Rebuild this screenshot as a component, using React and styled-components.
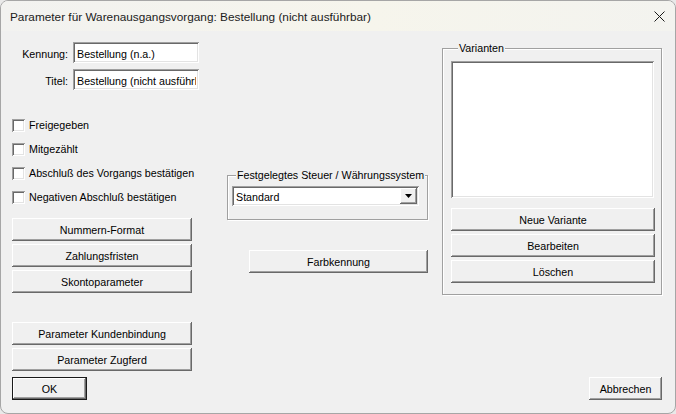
import React from 'react'
import styled, { createGlobalStyle, css } from 'styled-components'

const GlobalStyle = createGlobalStyle`
   html, body {
      margin: 0;
      padding: 0;
      background: #e9e9e9;
   }
   * {
      box-sizing: border-box;
   }
`

const dialogFont = css`
   font-family: "Liberation Sans", Arial, sans-serif;
   font-size: 10.7px;
   color: #000;
`

const raised = css`
   box-shadow: inset -1px -1px #696969, inset 1px 1px #ffffff,
      inset -2px -2px #a0a0a0, inset 2px 2px #f0f0f0;
`

const sunken = css`
   box-shadow: inset 1px 1px #a0a0a0, inset -1px -1px #ffffff,
      inset 2px 2px #696969, inset -2px -2px #e3e3e3;
`

const Window = styled.div`
   width: 676px;
   height: 414px;
   border: 1px solid #a6a6a6;
   border-radius: 8px;
   overflow: hidden;
   background: #f0f0f0;
   display: flex;
   flex-direction: column;
`

const TitleBar = styled.div`
   height: 30px;
   flex-shrink: 0;
   display: flex;
   align-items: center;
   justify-content: space-between;
   padding: 0 9px 0 9px;
   background: linear-gradient(90deg, #f2f2f0 0%, #f6f5ec 55%, #f3f3ef 100%);
`

const Title = styled.span`
   font-family: "Liberation Sans", Arial, sans-serif;
   font-size: 11.8px;
   color: #1b1b1b;
   padding-top: 1px;
`

const CloseButton = styled.div`
   width: 12px;
   height: 12px;
   margin-right: 1px;
   display: flex;
   align-items: center;
   justify-content: center;
`

const Body = styled.div`
   flex: 1;
   display: flex;
   flex-direction: column;
   padding: 11px 13px 0 11px;
   ${dialogFont}
`

const Columns = styled.div`
   display: flex;
   align-items: flex-start;
`

const LeftColumn = styled.div`
   width: 187px;
   display: flex;
   flex-direction: column;
`

const MiddleColumn = styled.div`
   width: 201px;
   margin-left: 28px;
   margin-top: 127px;
   display: flex;
   flex-direction: column;
   align-items: flex-end;
`

const RightColumn = styled.div`
   width: 220px;
   margin-left: 14px;
`

const FieldRow = styled.div`
   display: flex;
   align-items: center;
   gap: 5px;
   & + & {
      margin-top: 6px;
   }
`

const FieldLabel = styled.label`
   width: 56px;
   text-align: right;
   padding-top: 2px;
`

const TextBox = styled.input`
   ${dialogFont}
   ${sunken}
   width: 126px;
   height: 21px;
   border: none;
   background: #fff;
   padding: 2px 3px 0 4px;
   outline: none;
`

const CheckList = styled.div`
   margin-top: 23px;
   display: flex;
   flex-direction: column;
`

const CheckRow = styled.label`
   height: 24px;
   display: flex;
   align-items: center;
   gap: 4px;
`

const CheckBox = styled.input.attrs({ type: 'checkbox' })`
   appearance: none;
   margin: 0;
   width: 13px;
   height: 13px;
   background: #fff;
   ${sunken}
`

const ButtonStack = styled.div`
   display: flex;
   flex-direction: column;
   gap: 3px;
   margin-top: ${p => p.$gap}px;
`

const Button = styled.button`
   ${dialogFont}
   ${raised}
   width: ${p => p.$w}px;
   height: ${p => p.$h || 23}px;
   margin-top: ${p => p.$top || 0}px;
   display: flex;
   align-items: center;
   justify-content: center;
   border: none;
   padding: 1px 0 0 0;
   background: #f0f0f0;
   ${p => p.$default && css`
      box-shadow: inset 0 0 0 1px #1a1a1a, inset -2px -2px #696969,
         inset 2px 2px #ffffff, inset -3px -3px #a0a0a0;
   `}
`

const GroupBox = styled.fieldset`
   margin: 0;
   min-width: 0;
   border: 1px solid #a0a0a0;
   box-shadow: inset 1px 1px #ffffff, 1px 1px #ffffff;
   padding: ${p => p.$pad};
   width: 100%;
   display: flex;
   flex-direction: column;
`

const Legend = styled.legend`
   padding: 0 1px;
   margin-left: ${p => p.$indent}px;
   line-height: 13px;
   white-space: nowrap;
   background: #f0f0f0;
`

const ComboBox = styled.div`
   ${sunken}
   height: 20px;
   background: #fff;
   display: flex;
   align-items: center;
   justify-content: space-between;
   padding: 2px 2px 2px 4px;
`

const ComboText = styled.span`
   padding-top: 1px;
`

const ComboButton = styled.div`
   ${raised}
   width: 17px;
   height: 16px;
   background: #f0f0f0;
   display: flex;
   align-items: center;
   justify-content: center;
`

const ListBox = styled.div`
   ${sunken}
   height: 137px;
   width: 203px;
   background: #fff;
`

const VariantButtons = styled.div`
   display: flex;
   flex-direction: column;
   gap: 3px;
   margin-top: 10px;
`

const Footer = styled.div`
   display: flex;
   justify-content: space-between;
   align-items: center;
   margin-top: 6px;
`

const checks = [
   'Freigegeben',
   'Mitgezählt',
   'Abschluß des Vorgangs bestätigen',
   'Negativen Abschluß bestätigen',
]

const App = () => {
   return (
      <>
         <GlobalStyle />
         <Window>
            <TitleBar>
               <Title>Parameter für Warenausgangsvorgang: Bestellung (nicht ausführbar)</Title>
               <CloseButton>
                  <svg width="11" height="11" viewBox="0 0 11 11">
                     <path d="M0.5 0.5 L10.5 10.5 M10.5 0.5 L0.5 10.5" stroke="#1a1a1a" strokeWidth="1" fill="none" />
                  </svg>
               </CloseButton>
            </TitleBar>
            <Body>
               <Columns>
                  <LeftColumn>
                     <FieldRow>
                        <FieldLabel>Kennung:</FieldLabel>
                        <TextBox readOnly value="Bestellung (n.a.)" />
                     </FieldRow>
                     <FieldRow>
                        <FieldLabel>Titel:</FieldLabel>
                        <TextBox readOnly value="Bestellung (nicht ausführbar)" />
                     </FieldRow>
                     <CheckList>
                        {checks.map(c => (
                           <CheckRow key={c}>
                              <CheckBox />
                              <span>{c}</span>
                           </CheckRow>
                        ))}
                     </CheckList>
                     <ButtonStack $gap={9}>
                        <Button $w={180}>Nummern-Format</Button>
                        <Button $w={180}>Zahlungsfristen</Button>
                        <Button $w={180}>Skontoparameter</Button>
                     </ButtonStack>
                     <ButtonStack $gap={29}>
                        <Button $w={180}>Parameter Kundenbindung</Button>
                        <Button $w={180}>Parameter Zugferd</Button>
                     </ButtonStack>
                  </LeftColumn>
                  <MiddleColumn>
                     <GroupBox $pad="4px 8px 13px 4px">
                        <Legend $indent={4}>Festgelegtes Steuer / Währungssystem</Legend>
                        <ComboBox>
                           <ComboText>Standard</ComboText>
                           <ComboButton>
                              <svg width="7" height="4" viewBox="0 0 7 4">
                                 <path d="M0 0 H7 L3.5 4 Z" fill="#000" />
                              </svg>
                           </ComboButton>
                        </ComboBox>
                     </GroupBox>
                     <Button $w={179} $top={30}>Farbkennung</Button>
                  </MiddleColumn>
                  <RightColumn>
                     <GroupBox $pad="6px 6px 11px 8px">
                        <Legend $indent={7}>Varianten</Legend>
                        <ListBox />
                        <VariantButtons>
                           <Button $w={204}>Neue Variante</Button>
                           <Button $w={204}>Bearbeiten</Button>
                           <Button $w={204}>Löschen</Button>
                        </VariantButtons>
                     </GroupBox>
                  </RightColumn>
               </Columns>
               <Footer>
                  <Button $w={75} $default>OK</Button>
                  <Button $w={73}>Abbrechen</Button>
               </Footer>
            </Body>
         </Window>
      </>
   )
}

export default App
